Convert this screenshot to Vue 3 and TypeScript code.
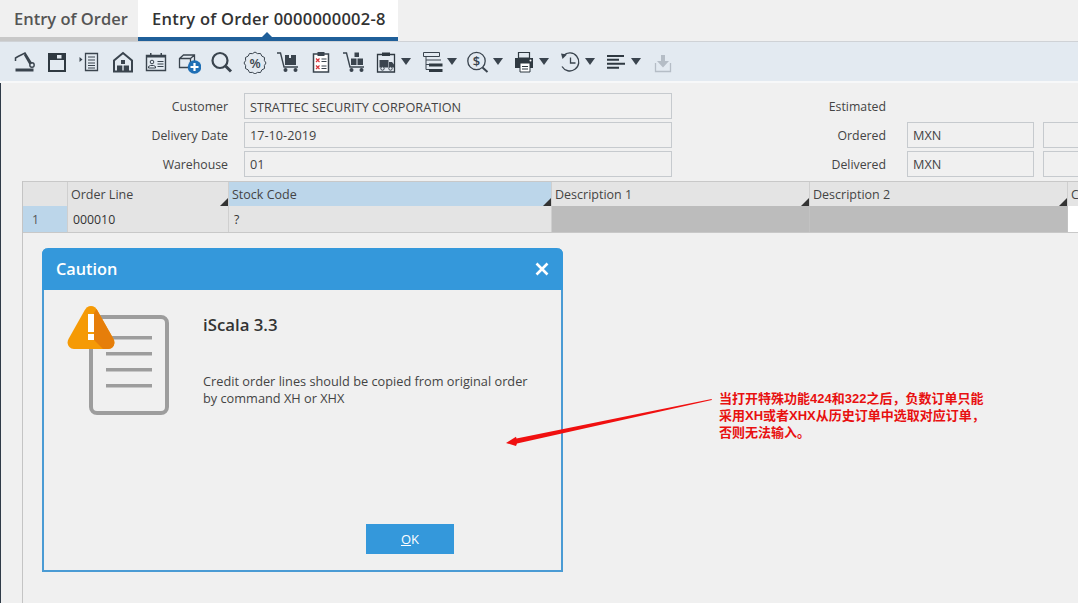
<script setup lang="ts">
// scalloped outline for the discount badge
const scallop = (cx: number, cy: number, r: number, bumps: number) => {
  let d = '';
  for (let i = 0; i < bumps * 2; i++) {
    const a = (Math.PI * i) / bumps;
    const rr = i % 2 === 0 ? r : r - 1.3;
    const x = (cx + Math.cos(a) * rr).toFixed(2);
    const y = (cy + Math.sin(a) * rr).toFixed(2);
    d += `${i === 0 ? 'M' : 'L'}${x} ${y} `;
  }
  return d + 'Z';
};
const badgePath = scallop(12, 13, 11, 12);

const formRows = [
  { label: 'Customer', value: 'STRATTEC SECURITY CORPORATION', side: 'Estimated', cur: '' },
  { label: 'Delivery Date', value: '17-10-2019', side: 'Ordered', cur: 'MXN' },
  { label: 'Warehouse', value: '01', side: 'Delivered', cur: 'MXN' },
];

const columns = [
  { name: '', cls: 'c-plain' },
  { name: 'Order Line', cls: 'c-sort' },
  { name: 'Stock Code', cls: 'c-sort c-active' },
  { name: 'Description 1', cls: 'c-sort' },
  { name: 'Description 2', cls: 'c-sort' },
  { name: 'C', cls: 'c-plain' },
];
</script>

<template>
  <div class="page">
    <div class="tabs">
      <div class="tab">Entry of Order</div>
      <div class="tab tab-on">Entry of Order 0000000002-8<i class="notch"></i></div>
    </div>

    <div class="toolbar">
      <div class="tb">
        <svg viewBox="0 0 24 24"><path d="M3.500 18.500h18v3h-18z" fill="#3a444e" /><path d="M6 6.500 13 3l6.500 10.500M3.500 11V8L6 6.500M12.500 4.500 18 14" fill="none" stroke="#3a444e" stroke-width="1.500" /><circle cx="20" cy="15" r="2.200" fill="none" stroke="#3a444e" stroke-width="1.400" /></svg>
      </div>
      <div class="tb">
        <svg viewBox="0 0 24 24"><path d="M4 4h16v17H4z" fill="none" stroke="#2f3941" stroke-width="2" /><path d="M4 4h16v6H4z" fill="#2f3941" /><path d="M12 5h4.500v3.500H12z" fill="#e3eaf1" /></svg>
      </div>
      <div class="tb">
        <svg viewBox="0 0 24 24"><path d="M1.500 7l3 2.500-3 2.500z" fill="#3a444e" /><path d="M7.500 3.500h12v17h-12z" fill="none" stroke="#3a444e" stroke-width="1.300" /><path d="M10 7h7M10 10h7M10 13h7M10 15.500h7M10 18h7" stroke="#3a444e" stroke-width="1" /></svg>
      </div>
      <div class="tb">
        <svg viewBox="0 0 24 24"><path d="M3 21.500V10.500L12 3l9 7.500v11z" fill="none" stroke="#3a444e" stroke-width="2" /><path d="M10 10h4v4h-4zM6 15.500h5.300V21H6zM12.700 15.500H18V21h-5.300z" fill="#3a444e" /></svg>
      </div>
      <div class="tb">
        <svg viewBox="0 0 24 24"><path d="M2.500 5.500h19v15h-19z" fill="none" stroke="#3a444e" stroke-width="1.400" /><path d="M2.500 5h19v2.500h-19zM6 3h1.500v3.500H6zM16.500 3H18v3.500h-1.500z" fill="#3a444e" /><circle cx="8" cy="12" r="1.800" fill="none" stroke="#3a444e" /><path d="M4.500 18v-1.500l2-1h3l2 1V18z" fill="none" stroke="#3a444e" /><path d="M13.500 11.500h6M13.500 14h6M13.500 16.500h6" stroke="#3a444e" stroke-width="1.200" /></svg>
      </div>
      <div class="tb">
        <svg viewBox="0 0 24 24"><path d="M2.500 8.500 6.500 5h11v12.500h-15zM2.500 8.500h11v9M13.500 8.500l4-3.500" fill="none" stroke="#3a444e" stroke-width="1.300" /><circle cx="17.500" cy="17" r="6.800" fill="#1f6fb5" /><path d="M17.500 13v8M13.500 17h8" stroke="#fff" stroke-width="2.200" /></svg>
      </div>
      <div class="tb">
        <svg viewBox="0 0 24 24"><circle cx="10" cy="10.500" r="7.500" fill="none" stroke="#3a444e" stroke-width="2.200" /><path d="M15.500 16 21 21.500" stroke="#3a444e" stroke-width="3" /></svg>
      </div>
      <div class="tb">
        <svg viewBox="0 0 24 24"><path :d="badgePath" fill="none" stroke="#3a444e" stroke-width="1" /><text x="12" y="17.500" text-anchor="middle" class="glyph">%</text></svg>
      </div>
      <div class="tb">
        <svg viewBox="0 0 24 24"><path d="M1 3h3.500L8 17h14" fill="none" stroke="#3a444e" stroke-width="1.400" /><path d="M9 5h4v3h2V5h5v10H9z" fill="#3a444e" /><circle cx="9.500" cy="20" r="2" fill="#3a444e" /><circle cx="19.500" cy="20" r="2" fill="#3a444e" /></svg>
      </div>
      <div class="tb">
        <svg viewBox="0 0 24 24"><path d="M4.500 4h15v18h-15z" fill="#fff" stroke="#3a444e" stroke-width="1.500" /><path d="M8.500 2h7v4h-7z" fill="#3a444e" /><path d="M7 8.500 10.500 12M10.500 8.500 7 12M7 15.500l3.500 3.500M10.500 15.500 7 19" stroke="#d8343a" stroke-width="1.200" /><path d="M12.500 9h5M12.500 11.500h5M12.500 16h5M12.500 18.500h5" stroke="#3a444e" stroke-width="1.200" /></svg>
      </div>
      <div class="tb">
        <svg viewBox="0 0 24 24"><path d="M1 3h3.500L8 17h14" fill="none" stroke="#3a444e" stroke-width="1.400" /><path d="M12.500 2.500h4.500v4.500h-4.500zM9 8.500h5.500V15H9zM15.500 8.500H21V15h-5.500z" fill="#3a444e" /><circle cx="9.500" cy="20" r="2" fill="#3a444e" /><circle cx="19.500" cy="20" r="2" fill="#3a444e" /></svg>
      </div>
      <div class="tb more">
        <svg viewBox="0 0 24 24"><path d="M3.500 4.500h17v17.500h-17z" fill="#e3eaf1" stroke="#2f3941" stroke-width="1.300" /><path d="M8 2.500h8v3.500H8z" fill="#2f3941" /><path d="M5.500 10h9v7.500h-9zM15 12h3l2 2.500v3h-5z" fill="#3a444e" /><circle cx="8.500" cy="18.500" r="1.700" fill="#e3eaf1" stroke="#3a444e" /><circle cx="16.500" cy="18.500" r="1.700" fill="#e3eaf1" stroke="#3a444e" /></svg>
        <i class="caret"></i>
      </div>
      <div class="tb more">
        <svg viewBox="0 0 24 24"><path d="M3.500 2.500h16v4h-16zM6 6.500V10M6 10h15M6 10v9.500" fill="none" stroke="#3a444e" stroke-width="1" /><path d="M9 13.500h13.500v3H9zM9 19h13.500v3H9z" fill="#2f3941" /><path d="M6 19.500h3M6 14.500h3" stroke="#3a444e" /></svg>
        <i class="caret"></i>
      </div>
      <div class="tb more">
        <svg viewBox="0 0 24 24"><circle cx="10.500" cy="11" r="8.700" fill="none" stroke="#3a444e" stroke-width="1.300" /><text x="10.500" y="15.500" text-anchor="middle" class="glyph dollar">$</text><path d="M16.500 17.500 21.500 22" stroke="#3a444e" stroke-width="2" /></svg>
        <i class="caret"></i>
      </div>
      <div class="tb more">
        <svg viewBox="0 0 24 24"><path d="M6.500 2.500h11V8h-11z" fill="none" stroke="#2f3941" stroke-width="1.200" /><path d="M3 8h18v10H3z" fill="#2f3941" /><path d="M8 13h10v9H8z" fill="#fff" stroke="#2f3941" /><path d="M10 16.500h6M10 19h6" stroke="#2f3941" /><circle cx="18.500" cy="10.500" r="1" fill="#fff" /></svg>
        <i class="caret"></i>
      </div>
      <div class="tb more">
        <svg viewBox="0 0 24 24"><path d="M5.500 5.500A9 9 0 1 1 4 16.500" fill="none" stroke="#3a444e" stroke-width="1.300" /><path d="M3 3.500 9 4.500 4.500 9z" fill="#3a444e" /><path d="M12.500 7.500V13h5" fill="none" stroke="#3a444e" stroke-width="1.300" /></svg>
        <i class="caret"></i>
      </div>
      <div class="tb more">
        <svg viewBox="0 0 24 24"><path d="M3 6h17M3 9.700h12M3 13.700h18M3 17.700h12" stroke="#2f3941" stroke-width="2" /></svg>
        <i class="caret"></i>
      </div>
      <div class="tb">
        <svg viewBox="0 0 24 24"><path d="M4.500 13v8.500h15V13" fill="none" stroke="#b5bdc6" stroke-width="1.300" /><path d="M10 5h4v6h4l-6 6.500L6 11h4z" fill="#b5bdc6" /></svg>
      </div>
    </div>

    <div class="main">
      <div class="form">
        <div v-for="row in formRows" :key="row.label" class="form-row">
          <span class="lbl">{{ row.label }}</span>
          <span class="field wide">{{ row.value }}</span>
          <span class="lbl side">{{ row.side }}</span>
          <template v-if="row.cur">
            <span class="field cur">{{ row.cur }}</span>
            <span class="field rest"></span>
          </template>
        </div>
      </div>

      <div class="table-wrap">
        <div class="table">
          <div v-for="col in columns" :key="col.name" class="th" :class="col.cls">{{ col.name }}</div>
          <div class="td td-head">1</div>
          <div class="td">000010</div>
          <div class="td">?</div>
          <div class="td td-off"></div>
          <div class="td td-off"></div>
          <div class="td td-white"></div>
        </div>
      </div>
    </div>

    <div class="dialog">
      <div class="dialog-title">
        <span>Caution</span>
        <svg class="close" viewBox="0 0 14 14"><path d="M1.500 1.500l11 11M12.500 1.500l-11 11" stroke="#fff" stroke-width="2.600" /></svg>
      </div>
      <div class="dialog-body">
        <svg class="warn" viewBox="0 0 110 116">
          <rect x="24" y="12" width="76" height="96" rx="6" fill="#f0f0f0" stroke="#9d9d9d" stroke-width="4" />
          <path d="M39 32.700h46M39 48.700h46M39 64.700h46M39 80.700h46" stroke="#9d9d9d" stroke-width="3.500" />
          <path d="M24 1C21 1 19 3 17.500 5.500L1.500 34C-1 39 2 44 7 44H41C46 44 49 39 46.500 34L30.500 5.500C29 3 27 1 24 1Z" fill="#f59a05" />
          <path d="M29.500 4 46.500 34C49 39 46 44 41 44H36L27 35 26.500 9Z" fill="#e67e0a" />
          <path d="M21 9h6v18h-6zM21 29h6v6h-6z" fill="#fff" />
        </svg>
        <div class="msg">
          <div class="msg-title">iScala 3.3</div>
          <p class="msg-text">Credit order lines should be copied from original order<br />by command XH or XHX</p>
        </div>
        <button class="ok"><u>O</u>K</button>
      </div>
    </div>

    <svg class="arrow" viewBox="0 0 220 60">
      <path d="M2 44 12 37.800 12.500 39.600 207.700 0 207.800 1 13 44.600 12 47Z" fill="#f01010" />
    </svg>
    <div class="note">
      <div>当打开特殊功能424和322之后，负数订单只能</div>
      <div>采用XH或者XHX从历史订单中选取对应订单，</div>
      <div>否则无法输入。</div>
    </div>
  </div>
</template>

<style>
html,
body {
  margin: 0;
  overflow: hidden;
}
</style>

<style scoped>
.page {
  position: relative;
  display: flex;
  flex-direction: column;
  width: 1078px;
  height: 603px;
  overflow: hidden;
  background: #f0f0f0;
  color: #444;
  font-family: "Open Sans", "Noto Sans", sans-serif;
  font-size: 12.300px;
}

.tabs {
  display: flex;
  flex: none;
  height: 41px;
  border-bottom: 1px solid #cfd2d6;
}
.tab {
  position: relative;
  box-sizing: border-box;
  width: 138px;
  height: 41px;
  padding: 9px 0 0 14px;
  border-bottom: 4px solid #c8c8c8;
  font-size: 16.500px;
  font-weight: 600;
  line-height: 20px;
  color: #555;
  white-space: nowrap;
}
.tab-on {
  width: 260px;
  background: #fff;
  border-bottom-color: #1f5f99;
  color: #333;
  letter-spacing: 0.240px;
}
.notch {
  position: absolute;
  left: 124px;
  bottom: 0;
  border: 5px solid transparent;
  border-top: 0;
  border-bottom-color: #1f5f99;
}

.toolbar {
  display: flex;
  flex: none;
  align-items: center;
  height: 39px;
  padding-left: 7px;
  background: #e3eaf1;
  border-bottom: 2px solid #f7f8f9;
}
.tb {
  display: flex;
  flex: none;
  align-items: center;
  justify-content: center;
  width: 33px;
}
.tb svg {
  flex: none;
  width: 24px;
  height: 24px;
}
.tb.more {
  justify-content: flex-start;
  box-sizing: border-box;
  width: 46px;
  padding-left: 4px;
}
.caret {
  margin-left: 3px;
  border-style: solid;
  border-width: 7px 5px 0;
  border-color: #3a444e transparent transparent;
}
.glyph {
  font-family: "Open Sans", sans-serif;
  font-size: 13px;
  font-weight: 600;
  fill: #3a444e;
}
.dollar {
  font-size: 13px;
}

.main {
  display: flex;
  flex: 1;
  flex-direction: column;
  min-height: 0;
  border-left: 1px solid #2f3b48;
}
.form {
  display: flex;
  flex-direction: column;
  gap: 3px;
  padding: 10px 0 4px;
}
.form-row {
  display: flex;
  align-items: center;
  height: 26px;
}
.form-row:first-child .lbl,
.form-row:first-child .field {
  line-height: 27px;
}
.lbl {
  flex: none;
  width: 227px;
  text-align: right;
}
.lbl.side {
  width: 214px;
}
.field {
  flex: none;
  box-sizing: border-box;
  height: 26px;
  padding-left: 5px;
  border: 1px solid #c6cace;
  font-size: 12.700px;
  line-height: 25px;
}
.field.wide {
  width: 428px;
  margin-left: 16px;
}
.field.cur {
  width: 127px;
  margin-left: 21px;
}
.field.rest {
  width: 60px;
  margin-left: 9px;
}

.table-wrap {
  flex: 1;
  margin-left: 21px;
  border-left: 1px solid #c4c4c4;
}
.table {
  display: grid;
  grid-template-columns: 45px 161px 323px 258px 258px 1fr;
  grid-template-rows: 24px 26px;
  border-top: 1px solid #c8c8c8;
  border-bottom: 1px solid #c8c8c8;
}
.th {
  position: relative;
  padding-left: 3px;
  background: #e4e4e4;
  border-right: 1px solid #cfcfcf;
  font-size: 12.500px;
  line-height: 25px;
  white-space: nowrap;
}
.c-sort::after {
  content: "";
  position: absolute;
  right: 0;
  bottom: 0;
  border-style: solid;
  border-width: 0 0 8px 8px;
  border-color: transparent transparent #333;
}
.c-active {
  background: #bcd6ea;
}
.td {
  padding-left: 5px;
  background: #e4e4e4;
  border-right: 1px solid #cfcfcf;
  line-height: 27px;
  color: #333;
}
.td-head {
  padding-left: 9px;
  background: #bcd6ea;
  color: #555;
}
.td-off {
  background: #bcbcbc;
  border-right-color: #c2c2c2;
}
.td-white {
  background: #fff;
  border-right: 0;
}

.dialog {
  position: absolute;
  left: 42px;
  top: 248px;
  display: flex;
  flex-direction: column;
  box-sizing: border-box;
  width: 521px;
  height: 324px;
  background: #f0f0f0;
  border: 2px solid #4a9bd4;
  border-top: 0;
  border-radius: 6px 6px 0 0;
}
.dialog-title {
  display: flex;
  flex: none;
  align-items: center;
  justify-content: space-between;
  height: 42px;
  margin: 0 -2px;
  padding: 0 14px;
  background: #3498db;
  border-radius: 6px 6px 0 0;
  color: #fff;
  font-size: 16.300px;
  font-weight: 600;
}
.close {
  width: 14px;
  height: 14px;
}
.dialog-body {
  position: relative;
  flex: 1;
  display: flex;
  padding-left: 23px;
}
.warn {
  flex: none;
  width: 110px;
  height: 116px;
  margin-top: 15px;
}
.msg {
  padding: 25px 0 0 26px;
}
.msg-title {
  font-size: 16.800px;
  font-weight: 600;
  line-height: 20px;
  color: #333;
}
.msg-text {
  margin: 38px 0 0;
  font-size: 12.750px;
  line-height: 17px;
  color: #444;
}
.ok {
  position: absolute;
  left: 322px;
  top: 234px;
  width: 88px;
  height: 30px;
  padding: 0;
  background: #3498db;
  border: 0;
  color: #fff;
  font-family: inherit;
  font-size: 13px;
}

.arrow {
  position: absolute;
  left: 504px;
  top: 399px;
  width: 220px;
  height: 60px;
}
.note {
  position: absolute;
  left: 719px;
  top: 390px;
  color: #e81010;
  font-family: "Liberation Sans", "Noto Sans CJK SC", sans-serif;
  font-size: 13px;
  font-weight: 700;
  line-height: 17px;
  white-space: nowrap;
}
</style>
